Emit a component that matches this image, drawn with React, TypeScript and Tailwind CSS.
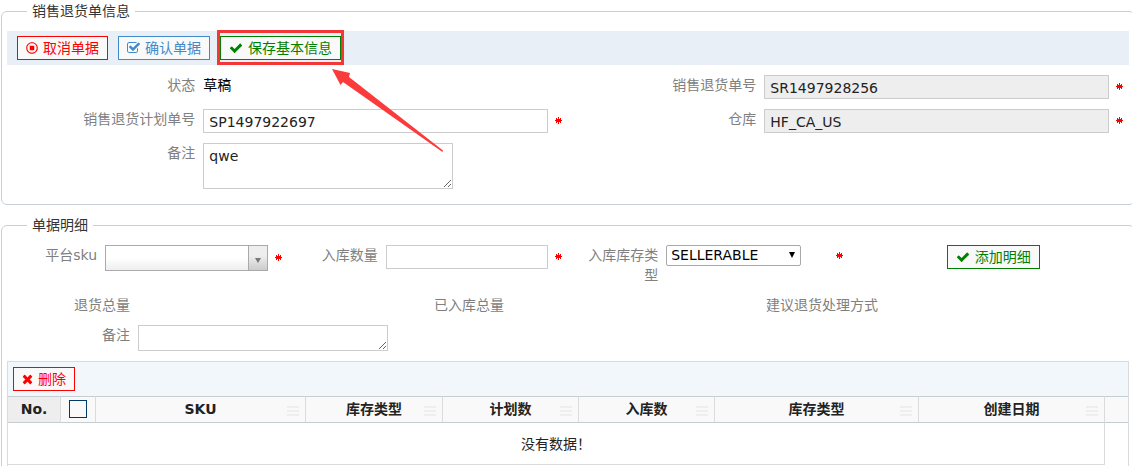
import type { ReactNode } from "react";
import { clsx } from "clsx";
import { FaRegStopCircle } from "react-icons/fa";

/* Icons */
function CheckIcon() {
  return (
    <svg viewBox="0 0 1792 1792" className="h-3.5 w-3.5 fill-current" aria-hidden="true">
      <path d="M1671 566q0 40-28 68l-724 724-136 136q-28 28-68 28t-68-28l-136-136-362-362q-28-28-28-68t28-68l136-136q28-28 68-28t68 28l294 295 656-657q28-28 68-28t68 28l136 136q28 28 28 68z" />
    </svg>
  );
}

function CheckSquareIcon() {
  return (
    <svg viewBox="64 0 1664 1792" className="h-3.5 w-[13px] fill-current" aria-hidden="true">
      <path d="M1472 930v318q0 119-84.5 203.5t-203.5 84.5h-832q-119 0-203.5-84.5t-84.5-203.5v-832q0-119 84.5-203.5t203.5-84.5h832q63 0 117 25 15 7 18 23 3 17-9 29l-49 49q-10 10-23 10-3 0-9-2-23-6-45-6h-832q-66 0-113 47t-47 113v832q0 66 47 113t113 47h832q66 0 113-47t47-113v-254q0-13 9-22l64-64q10-10 23-10 6 0 12 3 20 8 20 29zm231-489l-814 814q-24 24-57 24t-57-24l-430-430q-24-24-24-57t24-57l110-110q24-24 57-24t57 24l263 263 647-647q24-24 57-24t57 24l110 110q24 24 24 57t-24 57z" />
    </svg>
  );
}

function TimesIcon() {
  return (
    <svg viewBox="192 0 1408 1792" className="h-3.5 w-[11px] fill-current" aria-hidden="true">
      <path d="M1490 1322q0 40-28 68l-136 136q-28 28-68 28t-68-28l-294-294-294 294q-28 28-68 28t-68-28l-136-136q-28-28-28-68t28-68l294-294-294-294q-28-28-28-68t28-68l136-136q28-28 68-28t68 28l294 294 294-294q28-28 68-28t68 28l136 136q28 28 28 68t-28 68l-294 294 294 294q28 28 28 68z" />
    </svg>
  );
}

function Required() {
  return (
    <span className="flex w-5 shrink-0 justify-center">
      <svg viewBox="-1 0 8 8" className="h-2 w-2" role="img" aria-label="*">
        <path
          d="M0 3h7v1H0zM3 0h1v7H3zM1 1h1v1H1zM2 2h3v3H2zM1 2h5v1H1zM5 1h1v1H5zM1 4h5v1H1zM1 5h1v1H1zM5 5h1v1H5z"
          fill="#f00"
          shapeRendering="crispEdges"
        />
      </svg>
    </span>
  );
}

/* Building blocks */
const tones = {
  red: "border-[#f00] text-[#f00]",
  blue: "border-[#428bca] text-[#428bca]",
  green: "border-[#008000] text-[#008000]",
};

interface ToolButtonProps {
  tone: keyof typeof tones;
  icon: ReactNode;
  children: ReactNode;
}

function ToolButton({ tone, icon, children }: ToolButtonProps) {
  return (
    <button
      type="button"
      className={clsx(
        "flex h-6 items-center gap-[5px] border bg-[#f9f9f9] px-2 leading-5 whitespace-nowrap",
        tones[tone],
      )}
    >
      {icon}
      <span>{children}</span>
    </button>
  );
}

interface FieldProps {
  label: string;
  htmlFor?: string;
  required?: boolean;
  children?: ReactNode;
}

function Field({ label, htmlFor, required, children }: FieldProps) {
  return (
    <div className="flex items-start">
      <label htmlFor={htmlFor} className="w-[35%] shrink-0 px-2 text-right text-[#808080]">
        {label}
      </label>
      <div className="flex min-w-0 flex-1 items-center">
        <div className="min-w-0 flex-1">{children}</div>
        {required ? <Required /> : <span className="w-5 shrink-0" />}
      </div>
    </div>
  );
}

interface TextInputProps {
  id: string;
  value?: string;
  readOnly?: boolean;
}

function TextInput({ id, value = "", readOnly }: TextInputProps) {
  return (
    <input
      id={id}
      type="text"
      defaultValue={value}
      readOnly={readOnly}
      className={clsx(
        "block h-6 w-full border border-[#ccc] px-[5px] pt-0.5 text-[#222] outline-none",
        readOnly ? "bg-[#eee]" : "bg-white",
      )}
    />
  );
}

interface PanelProps {
  title: string;
  children: ReactNode;
}

function Panel({ title, children }: PanelProps) {
  return (
    <fieldset className="-mr-[3px] ml-px min-w-0 rounded-md border border-[#c5d0d8] px-[5px]">
      <legend className="ml-5 px-[5px] text-[#333]">{title}</legend>
      {children}
    </fieldset>
  );
}

/* Grid columns; SKU takes what is left */
const columns = [
  { title: "SKU", width: "" },
  { title: "库存类型", width: "w-[137px]" },
  { title: "计划数", width: "w-[136px]" },
  { title: "入库数", width: "w-[136px]" },
  { title: "库存类型", width: "w-[204px]" },
  { title: "创建日期", width: "w-[186px]" },
];

function DetailTable() {
  return (
    <div className="mt-2.5 border border-[#d8dcdf]">
      <div className="flex h-[34px] items-center bg-[#f2f7fc] px-[5px]">
        <ToolButton tone="red" icon={<TimesIcon />}>
          删除
        </ToolButton>
      </div>
      <table className="w-full table-fixed border-separate border-spacing-0 text-[#222]">
        <thead>
          <tr className="h-[27px] bg-[#f9f9f9]">
            <th className="w-[53px] border-y border-r border-y-[#c5cdd1] border-r-[#d8dcdf] bg-[#eee] p-0 pb-0.5">
              No.
            </th>
            <th className="w-[35px] border-y border-r border-y-[#c5cdd1] border-r-[#d8dcdf] p-0 pb-0.5">
              <input
                type="checkbox"
                aria-label="全选"
                className="mx-auto block h-[18px] w-[18px] appearance-none border border-[#003a6a] bg-[#f9f9f9]"
              />
            </th>
            {columns.map((column, index) => (
              <th
                key={index}
                className={clsx(
                  "relative border-y border-r border-y-[#c5cdd1] border-r-[#d8dcdf] p-0 pb-0.5",
                  column.width,
                )}
              >
                {column.title}
                <span className="absolute right-1.5 bottom-1.5 flex w-3 flex-col gap-0.5">
                  <span className="h-0.5 bg-[#eee]" />
                  <span className="h-0.5 bg-[#eee]" />
                  <span className="h-0.5 bg-[#eee]" />
                </span>
              </th>
            ))}
            <th className="w-[23px] border-y border-[#c5cdd1] p-0" />
          </tr>
        </thead>
        <tbody>
          <tr className="h-[42px]">
            <td colSpan={8} className="border-r border-b border-[#d8dcdf] p-0 text-center">
              没有数据！
            </td>
            <td className="p-0" />
          </tr>
        </tbody>
      </table>
      <div className="h-5" />
    </div>
  );
}

export default function App() {
  return (
    <main className="h-screen overflow-hidden bg-white pt-px font-['DejaVu_Sans','Noto_Sans_CJK_SC',sans-serif] text-sm leading-5">
      <Panel title="销售退货单信息">
        <div className="mt-2.5 flex h-[34px] items-center gap-2.5 bg-[#e8eff7] px-2.5">
          <ToolButton tone="red" icon={<FaRegStopCircle className="h-3 w-3" />}>
            取消单据
          </ToolButton>
          <ToolButton tone="blue" icon={<CheckSquareIcon />}>
            确认单据
          </ToolButton>
          <div className="relative">
            <ToolButton tone="green" icon={<CheckIcon />}>
              保存基本信息
            </ToolButton>
            {/* Highlight and pointer */}
            <div className="pointer-events-none absolute -inset-x-[3px] -top-1.5 -bottom-[5px] border-3 border-[#f33636]" />
            <svg
              viewBox="0 0 112 84"
              className="pointer-events-none absolute top-8 left-28 h-[84px] w-28 fill-[#fb3b3b]"
              aria-hidden="true"
            >
              <path d="M0 1L18 5L17 9L111 82.500L110.500 84L11 14L8.500 17Z" />
            </svg>
          </div>
        </div>

        <div className="mt-2.5 mb-[15px] grid grid-cols-2 gap-y-2.5">
          <Field label="状态">
            <span className="text-black">草稿</span>
          </Field>
          <Field label="销售退货单号" htmlFor="returnNo" required>
            <TextInput id="returnNo" value="SR1497928256" readOnly />
          </Field>
          <Field label="销售退货计划单号" htmlFor="planNo" required>
            <TextInput id="planNo" value="SP1497922697" />
          </Field>
          <Field label="仓库" htmlFor="warehouse" required>
            <TextInput id="warehouse" value="HF_CA_US" readOnly />
          </Field>
          <Field label="备注" htmlFor="remark">
            <textarea
              id="remark"
              defaultValue="qwe"
              className="block h-[46px] w-[250px] border border-[#ccc] bg-white px-[5px] py-0.5 text-[#222] outline-none"
            />
          </Field>
        </div>
      </Panel>

      <div className="mt-2.5">
        <Panel title="单据明细">
          <div className="mt-2.5 grid grid-cols-4">
            <Field label="平台sku" htmlFor="sku" required>
              <div className="flex h-[26px] border border-[#aaa] bg-linear-to-b from-white from-50% to-[#eee]">
                <input id="sku" type="text" className="min-w-0 flex-1 px-[5px] outline-none" />
                <button
                  type="button"
                  aria-label="展开"
                  className="flex w-[19px] items-center justify-center border-l border-[#aaa] bg-linear-to-b from-[#eee] from-40% to-[#ccc] pt-1"
                >
                  <svg viewBox="0 0 6 5" className="h-[5px] w-1.5 fill-[#777]" aria-hidden="true">
                    <path d="M0 0h6L3 5z" />
                  </svg>
                </button>
              </div>
            </Field>
            <Field label="入库数量" htmlFor="quantity" required>
              <TextInput id="quantity" />
            </Field>
            <Field label="入库库存类型" htmlFor="stockType" required>
              <div className="relative w-[135px]">
                <select
                  id="stockType"
                  className="block h-[21px] w-full appearance-none rounded-xs border border-[#a9a9a9] bg-white px-1 leading-[19px] text-black"
                >
                  <option>SELLERABLE</option>
                </select>
                <svg
                  viewBox="0 0 6 6"
                  className="pointer-events-none absolute top-[7px] right-1.5 h-1.5 w-1.5 fill-black"
                  aria-hidden="true"
                >
                  <path d="M0 0h6L3 6z" />
                </svg>
              </div>
            </Field>
            <div className="pl-[35%]">
              <ToolButton tone="green" icon={<CheckIcon />}>
                添加明细
              </ToolButton>
            </div>
          </div>
          <div className="mt-2.5 grid grid-cols-3 gap-y-2.5">
            <Field label="退货总量" />
            <Field label="已入库总量" />
            <Field label="建议退货处理方式" />
            <Field label="备注" htmlFor="detailRemark">
              <textarea
                id="detailRemark"
                className="block h-[26px] w-[250px] border border-[#ccc] bg-white px-[5px] outline-none"
              />
            </Field>
          </div>
          <DetailTable />
        </Panel>
      </div>
    </main>
  );
}
